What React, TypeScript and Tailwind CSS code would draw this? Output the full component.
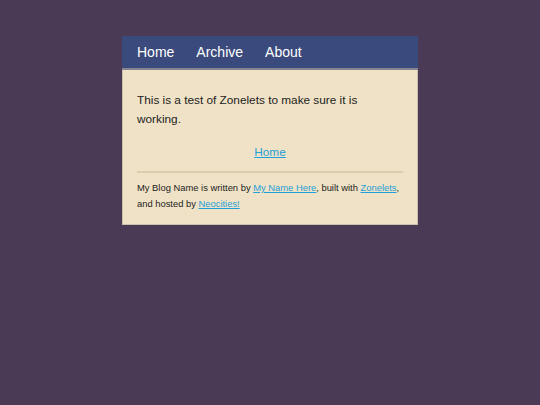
import React from "react";

export default function App() {
  return (
    <div
      className="min-h-screen h-[405px] bg-[#4a3a56] pt-[36px]"
      style={{ fontFamily: '"Liberation Sans", Arial, sans-serif' }}
    >
      <div className="mx-auto w-[296px]">
        <nav className="flex h-[34px] items-center gap-[22px] border-b-2 border-[#85858f] bg-[#3a4a7c] pl-[15px] text-[14px] text-white">
          <a href="#">Home</a>
          <a href="#">Archive</a>
          <a href="#">About</a>
        </nav>
        <div className="border-x border-b border-[#cbbfae] bg-[#f0e2c6] px-[14px] pt-[21px] pb-[12px] text-[#222]">
          <p className="text-[11.8px] leading-[18.5px]">
            This is a test of Zonelets to make sure it is working.
          </p>
          <div className="mt-[15px] text-center text-[11.8px] leading-[18px]">
            <a href="#" className="text-[#1fa0d8] underline">
              Home
            </a>
          </div>
          <div className="mt-[10px] h-[2px] bg-[#ddcdaf]" />
          <p className="mt-[7px] text-[9.4px] leading-[16px]">
            My Blog Name is written by{" "}
            <a href="#" className="text-[#1fa0d8] underline">
              My Name Here
            </a>
            , built with{" "}
            <a href="#" className="text-[#1fa0d8] underline">
              Zonelets
            </a>
            , and hosted by{" "}
            <a href="#" className="text-[#1fa0d8] underline">
              Neocities!
            </a>
          </p>
        </div>
      </div>
    </div>
  );
}
